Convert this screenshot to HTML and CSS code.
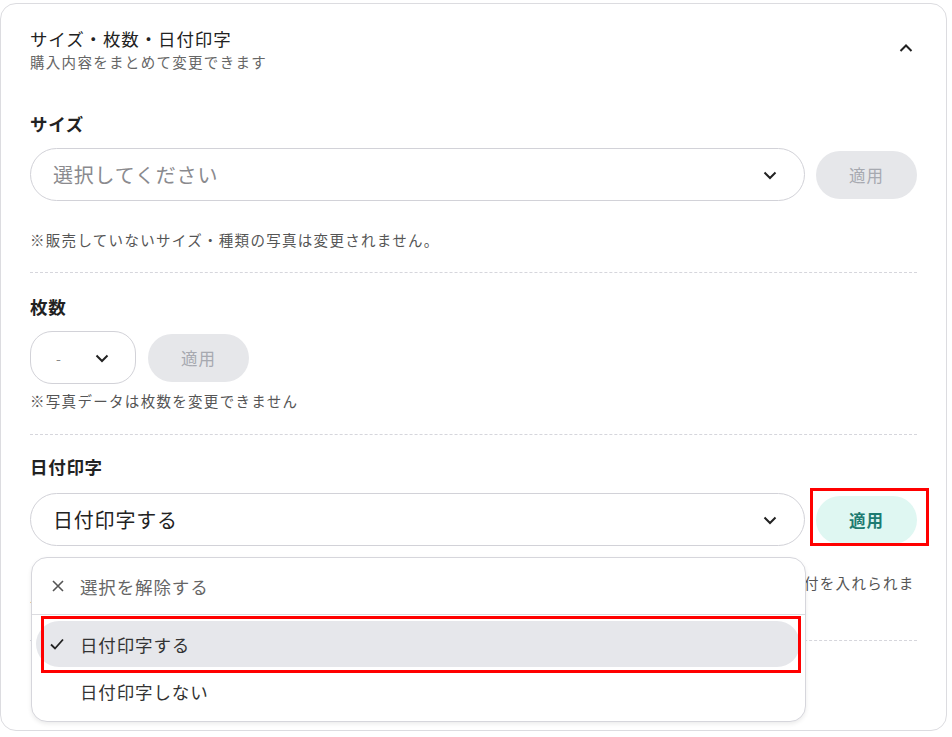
FILE: index.html
```html
<!DOCTYPE html>
<html lang="ja">
<head>
<meta charset="utf-8">
<title>サイズ・枚数・日付印字</title>
<link rel="stylesheet" href="styles.css">
</head>
<body>
<div class="card">
  <div class="card-head">
    <div class="head-text">
      <div class="title">サイズ・枚数・日付印字</div>
      <div class="sub">購入内容をまとめて変更できます</div>
    </div>
    <svg class="chev-up" width="14" height="10" viewBox="0 0 14 10"><path d="M1.5 8 L7 2.5 L12.5 8" fill="none" stroke="#222" stroke-width="2"/></svg>
  </div>

  <section class="field f1">
    <div class="label">サイズ</div>
    <div class="row">
      <div class="select wide">
        <span class="placeholder">選択してください</span>
        <svg class="chev" width="14" height="10" viewBox="0 0 14 10"><path d="M1.5 2.5 L7 8 L12.5 2.5" fill="none" stroke="#222" stroke-width="2"/></svg>
      </div>
      <button class="apply">適用</button>
    </div>
    <p class="note n1">※販売していないサイズ・種類の写真は変更されません。</p>
  </section>
  <hr class="divider d1">

  <section class="field f2">
    <div class="label">枚数</div>
    <div class="row">
      <div class="select small">
        <span class="dash">-</span>
        <svg class="chev" width="14" height="10" viewBox="0 0 14 10"><path d="M1.5 2.5 L7 8 L12.5 2.5" fill="none" stroke="#222" stroke-width="2"/></svg>
      </div>
      <button class="apply">適用</button>
    </div>
    <p class="note n2">※写真データは枚数を変更できません</p>
  </section>
  <hr class="divider d2">

  <section class="field f3">
    <div class="label">日付印字</div>
    <div class="row anchor">
      <div class="select wide">
        <span class="value">日付印字する</span>
        <svg class="chev" width="14" height="10" viewBox="0 0 14 10"><path d="M1.5 2.5 L7 8 L12.5 2.5" fill="none" stroke="#222" stroke-width="2"/></svg>
      </div>
      <button class="apply active">適用</button>

      <div class="menu">
        <div class="menu-clear">
          <svg class="ico" width="14" height="14" viewBox="0 0 14 14"><path d="M2 2 L12 12 M12 2 L2 12" fill="none" stroke="#555" stroke-width="1.6"/></svg>
          <span>選択を解除する</span>
        </div>
        <div class="menu-list">
          <div class="opt selected">
            <svg class="ico" width="14" height="12" viewBox="0 0 14 12"><path d="M1 6.5 L5 10.5 L13 1.5" fill="none" stroke="#222" stroke-width="1.8"/></svg>
            <span>日付印字する</span>
          </div>
          <div class="opt">
            <span class="ico-space"></span>
            <span>日付印字しない</span>
          </div>
        </div>
      </div>

      <div class="mark mark-apply"></div>
      <div class="mark mark-opt"></div>
    </div>
    <p class="note n3">※データ写真、証明写真、一部の特殊サイズ（パノラマ・ワイド・スクエア）およびフォトブックには撮影日付を入れられません。</p>
  </section>
  <hr class="divider d3">
  <div class="card-foot"></div>
</div>
</body>
</html>
```
FILE: styles.css
```css
* { box-sizing: border-box; }
html, body { margin: 0; padding: 0; background: #fff; }
body {
  font-family: "Noto Sans CJK JP", "Noto Sans", sans-serif;
  color: #222;
  width: 952px;
  height: 737px;
  overflow: hidden;
}
.card {
  margin: 3px 0 0 0;
  width: 947px;
  border: 1px solid #dcdce0;
  border-radius: 16px;
  padding: 23px 29px 0 29px;
  background: #fff;
}
.card-head {
  display: flex;
  justify-content: space-between;
  align-items: flex-start;
}
.title {
  font-size: 17.5px;
  line-height: 24px;
  letter-spacing: 0.05em;
  color: #222;
}
.sub {
  margin-top: 1px;
  font-size: 14.5px;
  line-height: 20px;
  letter-spacing: 0.09em;
  color: #666;
}
.chev-up { margin-top: 16px; margin-right: 4px; }

.label {
  font-size: 17.5px;
  line-height: 24px;
  font-weight: 700;
  letter-spacing: 0.04em;
  color: #222;
}
.f1 .label { margin-top: 40px; }
.f2 .label { margin-top: 22px; }
.f3 .label { margin-top: 20px; }
.row {
  display: flex;
  align-items: center;
  gap: 11px;
  margin-top: 12px;
}
.f3 .row { margin-top: 14px; }
.anchor { position: relative; }
.select {
  height: 53px;
  border: 1px solid #d2d2d8;
  border-radius: 27px;
  display: flex;
  align-items: center;
  justify-content: space-between;
  background: #fff;
}
.select.wide { width: 775px; padding: 0 27px 0 22px; }
.select.small { width: 106px; border-radius: 22px; padding: 0 26px 0 22px; }
.f2 .row { gap: 12px; }
.placeholder {
  font-size: 20px;
  letter-spacing: 0.04em;
  color: #8a8a8e;
}
.value {
  font-size: 20px;
  letter-spacing: 0.04em;
  color: #222;
}
.dash { font-size: 14px; color: #888; padding-left: 3px; }
.apply {
  width: 101px;
  height: 48px;
  border: 0;
  border-radius: 24px;
  background: #e6e7ea;
  color: #a6a9b0;
  font-family: inherit;
  font-size: 16.5px;
  letter-spacing: 0.06em;
  padding: 0;
}
.apply.active {
  background: #dff7f2;
  color: #1d7b71;
  font-weight: 700;
}
.note {
  margin: 0;
  font-size: 14.5px;
  line-height: 20px;
  letter-spacing: 0.09em;
  color: #555;
  text-spacing-trim: space-all;
}
.n1 { margin-top: 29px; }
.n2 { margin-top: 7px; }
.n3 { margin-top: 27px; }
.divider {
  margin: 0;
  border: 0;
  border-top: 1px dashed #d6d6dc;
  height: 0;
}
.d1 { margin-top: 22px; }
.d2 { margin-top: 23px; }
.d3 { margin-top: 27px; }
.card-foot { height: 89px; }

.menu {
  position: absolute;
  top: 64px;
  left: 1px;
  width: 775px;
  height: 165px;
  border: 1px solid #d6d6dc;
  border-radius: 16px;
  background: #fff;
  box-shadow: 0 2px 4px rgba(0,0,0,0.08);
  z-index: 2;
}
.menu-clear {
  height: 57px;
  display: flex;
  align-items: center;
  padding-left: 19px;
  gap: 15px;
  border-bottom: 1px solid #dcdce0;
  font-size: 17.5px;
  letter-spacing: 0.05em;
  color: #666;
}
.menu-list { padding: 6px 5px 0 4px; }
.opt {
  display: flex;
  align-items: center;
  gap: 16px;
  padding-left: 14px;
  font-size: 17.5px;
  letter-spacing: 0.05em;
  color: #333;
  height: 48px;
}
.opt.selected {
  height: 46px;
  background: #e6e7eb;
  border-radius: 23px;
  color: #333;
}
.ico { flex: none; }
.ico-space { width: 14px; flex: none; }

.mark {
  position: absolute;
  border: 3px solid #ff0000;
  z-index: 3;
}
.mark-apply { left: 780px; top: -5px; width: 119px; height: 58px; }
.mark-opt { left: 11px; top: 123px; width: 760px; height: 57px; }
```
